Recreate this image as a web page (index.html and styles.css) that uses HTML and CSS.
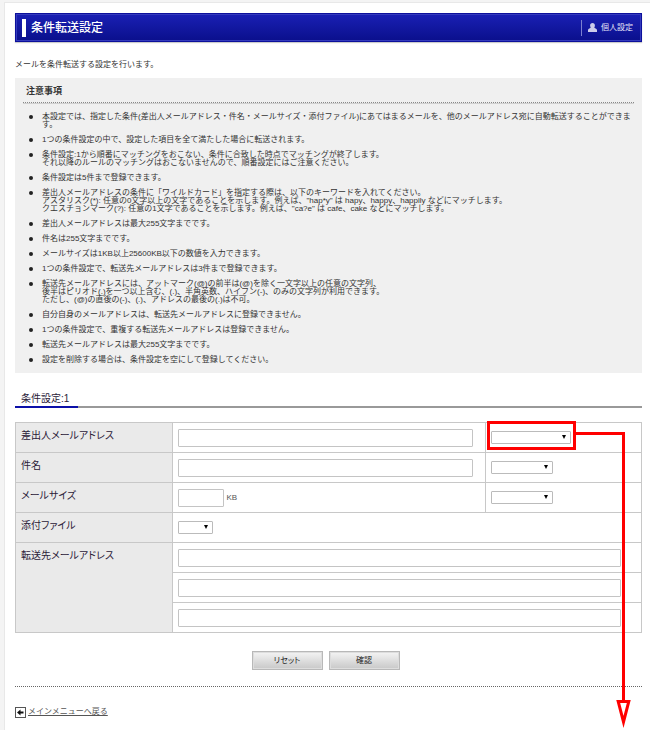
FILE: index.html
```html
<!DOCTYPE html>
<html lang="ja">
<head>
<meta charset="utf-8">
<title>条件転送設定</title>
<link rel="stylesheet" href="styles.css">
</head>
<body>
<main class="panel">
  <header class="titlebar">
    <h1>条件転送設定</h1>
    <a class="personal" href="#">
      <svg width="9" height="9" viewBox="0 0 9 9" aria-hidden="true"><path d="M4.500 0C6 0 7 1 6.900 2.400C6.800 3.600 6.500 4.200 6.200 4.700C6.500 5.200 8.800 5.400 9 7V9H0V7C.2 5.400 2.500 5.200 2.800 4.700C2.500 4.200 2.200 3.600 2.100 2.400C2 1 3 0 4.500 0Z"/></svg>
      <span>個人設定</span>
    </a>
  </header>
  <p class="intro">メールを条件転送する設定を行います。</p>
  <section class="notes">
    <h2>注意事項</h2>
    <ul>
      <li>本設定では、指定した条件(差出人メールアドレス・件名・メールサイズ・添付ファイル)にあてはまるメールを、他のメールアドレス宛に自動転送することができます。</li>
      <li>1つの条件設定の中で、設定した項目を全て満たした場合に転送されます。</li>
      <li>条件設定:1から順番にマッチングをおこない、条件に合致した時点でマッチングが終了します。<br>それ以降のルールのマッチングはおこないませんので、順番設定にはご注意ください。</li>
      <li>条件設定は5件まで登録できます。</li>
      <li>差出人メールアドレスの条件に「ワイルドカード」を指定する際は、以下のキーワードを入れてください。<br>アスタリスク(*): 任意の0文字以上の文字であることを示します。例えば、"hap*y" は hapy、happy、happily などにマッチします。<br>クエスチョンマーク(?): 任意の1文字であることを示します。例えば、"ca?e" は cafe、cake などにマッチします。</li>
      <li>差出人メールアドレスは最大255文字までです。</li>
      <li>件名は255文字までです。</li>
      <li>メールサイズは1KB以上25600KB以下の数値を入力できます。</li>
      <li>1つの条件設定で、転送先メールアドレスは3件まで登録できます。</li>
      <li>転送先メールアドレスには、アットマーク(@)の前半は(@)を除く一文字以上の任意の文字列、<br>後半はピリオド(.)を一つ以上含む、(.)、半角英数、ハイフン(-)、のみの文字列が利用できます。<br>ただし、(@)の直後の(-)、(.)、アドレスの最後の(.)は不可。</li>
      <li>自分自身のメールアドレスは、転送先メールアドレスに登録できません。</li>
      <li>1つの条件設定で、重複する転送先メールアドレスは登録できません。</li>
      <li>転送先メールアドレスは最大255文字までです。</li>
      <li>設定を削除する場合は、条件設定を空にして登録してください。</li>
    </ul>
  </section>
  <form>
    <h2 class="section-title"><span>条件設定:1</span></h2>
    <table>
      <colgroup><col class="col-label"><col><col class="col-match"></colgroup>
      <tr>
        <th scope="row"><label for="sender">差出人メールアドレス</label></th>
        <td><input class="text" id="sender" type="text"></td>
        <td>
          <span class="select wide">
            <select aria-label="差出人の一致条件"><option></option></select>
            <span class="callout"></span>
            <svg class="arrow" width="56" height="302" viewBox="0 0 56 302" aria-hidden="true"><path d="M0 4.500H48.500V274" fill="none" stroke="#f00" stroke-width="3"/><path d="M43.200 272.500H53.800L48.500 293Z" fill="#fff" stroke="#f00" stroke-width="3" stroke-miterlimit="10"/></svg>
          </span>
        </td>
      </tr>
      <tr>
        <th scope="row"><label for="subject">件名</label></th>
        <td><input class="text" id="subject" type="text"></td>
        <td><span class="select medium"><select aria-label="件名の一致条件"><option></option></select></span></td>
      </tr>
      <tr>
        <th scope="row"><label for="size">メールサイズ</label></th>
        <td><input class="text short" id="size" type="text"><span class="unit">KB</span></td>
        <td><span class="select medium"><select aria-label="メールサイズの条件"><option></option></select></span></td>
      </tr>
      <tr>
        <th scope="row"><label for="attachment">添付ファイル</label></th>
        <td colspan="2"><span class="select small"><select id="attachment"><option></option></select></span></td>
      </tr>
      <tr>
        <th scope="row" rowspan="3"><label for="forward1">転送先メールアドレス</label></th>
        <td class="forward" colspan="2"><input class="text" id="forward1" type="text"></td>
      </tr>
      <tr><td class="forward" colspan="2"><input class="text" type="text" aria-label="転送先メールアドレス 2"></td></tr>
      <tr><td class="forward" colspan="2"><input class="text" type="text" aria-label="転送先メールアドレス 3"></td></tr>
    </table>
    <div class="actions">
      <button type="reset">リセット</button>
      <button type="submit">確認</button>
    </div>
  </form>
  <footer>
    <a href="#">
      <svg width="11" height="11" viewBox="0 0 11 11" aria-hidden="true"><rect x=".5" y=".5" width="10" height="10" fill="#fff" stroke="#555"/><path d="M2 5.500L5.500 2.500V4.500H8.500V6.500H5.500V8.500Z" fill="#111"/></svg>
      <span>メインメニューへ戻る</span>
    </a>
  </footer>
</main>
</body>
</html>
```
FILE: styles.css
```css
* { box-sizing: border-box; }

body {
  margin: 0;
  padding: 2px 0 0 4px;
  background: #f4f4f4;
  color: #333;
  font-family: "Liberation Sans", "Noto Sans CJK JP", sans-serif;
  font-size: 8px;
  line-height: 12px;
}

h1, h2, p, ul { margin: 0; padding: 0; }

.panel {
  padding: 10px 8px 10px 10px;
  background: #fff;
  border: 1px solid #e8e8e8;
  border-right: 0;
}

.titlebar {
  display: flex;
  align-items: center;
  justify-content: space-between;
  height: 29px;
  padding: 0 8px 0 6px;
  color: #fff;
  background: linear-gradient(#1a20b4, #0a0f8c);
  border: 1px solid #0c109c;
  box-shadow: inset 0 0 0 1px #353bbc, 0 1px 1px #ccc;
}

.titlebar h1 {
  padding-left: 5px;
  border-left: 4px solid #fff;
  font-size: 12px;
  font-weight: 500;
  line-height: 18px;
}

.personal {
  display: flex;
  align-items: center;
  gap: 4px;
  padding-left: 6px;
  border-left: 1px solid #7c80d0;
  color: #e4e4f8;
  line-height: 16px;
  text-decoration: none;
}

.personal svg { fill: #ccccea; }

.intro { margin: 17px 0 7px; }

.notes {
  padding: 7px 8px 9px;
  background: #f0f0f0;
}

.notes h2 {
  padding: 0 3px 5px;
  border-bottom: 1px dotted #888;
  box-shadow: 0 1px #d0d0d0;
  font-size: 9px;
  line-height: 12px;
}

.notes ul {
  padding: 10px 0 0 19px;
  list-style: none;
  line-height: 8px;
}

.notes li { position: relative; margin-bottom: 7px; }

.notes li:last-child { margin-bottom: 0; }

.notes li::before {
  content: "";
  position: absolute;
  left: -13px;
  top: 2px;
  width: 4px;
  height: 4px;
  border-radius: 50%;
  background: #222;
}

.section-title {
  margin-top: 18px;
  border-bottom: 2px solid #999;
  color: #2a2038;
  font-size: 10px;
  font-weight: 400;
  line-height: 15px;
}

.section-title span {
  display: inline-block;
  min-width: 63px;
  margin-bottom: -2px;
  padding-left: 6px;
  border-bottom: 2px solid #0c10a8;
}

table {
  width: 100%;
  margin-top: 14px;
  border-collapse: collapse;
  table-layout: fixed;
}

.col-label { width: 25%; }
.col-match { width: 25%; }

th, td {
  height: 30px;
  padding: 0 5px;
  border: 1px solid #c8c8c8;
  text-align: left;
}

th {
  padding-top: 5px;
  background: #eaeaea;
  color: #2a2038;
  font-size: 10px;
  font-weight: 400;
  line-height: 15px;
  font-feature-settings: "palt";
  vertical-align: top;
}

td { vertical-align: middle; line-height: 0; }

.text {
  width: calc(100% - 7px);
  height: 18px;
  padding: 0 3px;
  border: 1px solid #c4c4c4;
  border-radius: 1px;
  background: #fff;
  font: inherit;
  line-height: 16px;
  vertical-align: middle;
}

.text.short { width: 46px; }

.forward .text { width: calc(100% - 15px); }

.unit {
  margin-left: 3px;
  color: #555;
  line-height: 12px;
  vertical-align: middle;
}

.select {
  display: inline-block;
  position: relative;
  vertical-align: middle;
}

.select::after {
  content: "";
  position: absolute;
  top: 4px;
  right: 5px;
  border: 2px solid transparent;
  border-top: 4px solid #000;
  border-bottom: 0;
}

.wide { width: 80px; }
.medium { width: 62px; }
.small { width: 35px; }

select {
  appearance: none;
  display: block;
  width: 100%;
  height: 13px;
  border: 1px solid #bbb;
  border-radius: 1px;
  background: #fff;
  font-size: 8px;
}

.callout {
  position: absolute;
  inset: -10px -5px -6px -4px;
  border: 3px solid #f00;
  pointer-events: none;
}

.arrow {
  position: absolute;
  left: 84px;
  top: -2px;
  z-index: 1;
  pointer-events: none;
}

.actions {
  display: flex;
  justify-content: center;
  gap: 6px;
  margin-top: 18px;
  padding-right: 6px;
}

button {
  width: 71px;
  height: 19px;
  padding: 0;
  border: 1px solid #b8b8b8;
  background: linear-gradient(#f4f4f4, #c8c8c8);
  color: #222;
  font: inherit;
  font-feature-settings: "palt";
  box-shadow: inset 0 0 0 1px #ddd;
}

footer {
  margin-top: 16px;
  padding-top: 19px;
  border-top: 1px dotted #666;
}

footer a {
  display: inline-flex;
  align-items: center;
  gap: 2px;
  color: #555;
  text-decoration: none;
}

footer a span { text-decoration: underline; }
```
